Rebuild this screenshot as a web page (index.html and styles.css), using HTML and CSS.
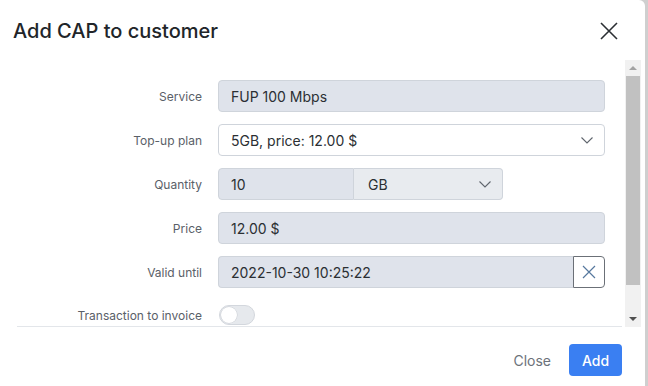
FILE: index.html
```html
<!DOCTYPE html>
<html>
<head>
<meta charset="utf-8">
<link rel="stylesheet" href="styles.css">
</head>
<body>
<div class="modal">
  <div class="modal-header">
    <h2 class="title">Add CAP to customer</h2>
    <button class="close-btn" aria-label="Close">
      <svg width="18" height="18" viewBox="0 0 18 18"><path d="M1 1 L17 17 M17 1 L1 17" stroke="#2b2f33" stroke-width="1.6" fill="none"/></svg>
    </button>
  </div>
  <div class="modal-body">
    <div class="scroll-content">
      <div class="form">
        <div class="row">
          <label class="label">Service</label>
          <div class="control"><div class="input disabled">FUP 100 Mbps</div></div>
        </div>
        <div class="row">
          <label class="label">Top-up plan</label>
          <div class="control">
            <div class="input select">5GB, price: 12.00 $
              <svg class="chev" width="12" height="7" viewBox="0 0 12 7"><path d="M0.5 0.5 L6 6 L11.5 0.5" stroke="#5f656d" stroke-width="1.1" fill="none"/></svg>
            </div>
          </div>
        </div>
        <div class="row">
          <label class="label">Quantity</label>
          <div class="control group qty">
            <div class="input disabled qty-input">10</div>
            <div class="input unit">GB
              <svg class="chev" width="12" height="7" viewBox="0 0 12 7"><path d="M0.5 0.5 L6 6 L11.5 0.5" stroke="#5f656d" stroke-width="1.1" fill="none"/></svg>
            </div>
          </div>
        </div>
        <div class="row">
          <label class="label">Price</label>
          <div class="control"><div class="input disabled">12.00 $</div></div>
        </div>
        <div class="row">
          <label class="label">Valid until</label>
          <div class="control group">
            <div class="input disabled date">2022-10-30 10:25:22</div>
            <button class="clear-btn" aria-label="Clear">
              <svg width="14" height="14" viewBox="0 0 14 14"><path d="M1 1 L13 13 M13 1 L1 13" stroke="#56789e" stroke-width="1.2" fill="none"/></svg>
            </button>
          </div>
        </div>
        <div class="row toggle-row">
          <label class="label">Transaction to invoice</label>
          <div class="control"><span class="toggle"><span class="knob"></span></span></div>
        </div>
      </div>
      <div class="divider"></div>
    </div>
    <div class="scrollbar">
      <div class="sb-btn"><span class="tri up"></span></div>
      <div class="sb-track"><div class="sb-thumb"></div></div>
      <div class="sb-btn"><span class="tri down"></span></div>
    </div>
  </div>
  <div class="modal-footer">
    <button class="btn btn-link">Close</button>
    <button class="btn btn-primary">Add</button>
  </div>
</div>
</body>
</html>
```
FILE: styles.css
```css
* { box-sizing: border-box; }
html, body { margin: 0; padding: 0; }
body {
  width: 648px;
  height: 386px;
  overflow: hidden;
  background: #cfcfcf;
  font-family: Inter, "Noto Sans", sans-serif;
  color: #2b2f33;
}
.modal {
  width: 645px;
  height: 390px;
  background: #fff;
  border-radius: 0 6px 0 0;
  display: flex;
  flex-direction: column;
}
.modal-header {
  height: 57px;
  display: flex;
  align-items: center;
  justify-content: space-between;
  padding: 4px 27px 0 13px;
}
.title {
  margin: 0;
  font-size: 20px;
  font-weight: 500;
  color: #212529;
}
.close-btn {
  border: 0;
  background: none;
  padding: 0;
  width: 18px;
  height: 18px;
  display: flex;
}
.modal-body {
  display: flex;
  height: 270px;
}
.scroll-content {
  flex: 1;
  overflow: hidden;
  padding: 0 0 0 17px;
  display: flex;
  flex-direction: column;
}
.form {
  flex: 1;
  overflow: hidden;
  padding-top: 23px;
  padding-right: 20px;
  display: flex;
  flex-direction: column;
  gap: 12px;
}
.row {
  display: flex;
  align-items: center;
  height: 32px;
  flex-shrink: 0;
}
.toggle-row { align-items: flex-start; }
.toggle-row .label { margin-top: 8px; }
.label {
  width: 185px;
  text-align: right;
  font-size: 12px;
  color: #5a6068;
  margin-right: 16px;
}
.control { flex: 1; display: flex; }
.input {
  height: 32px;
  flex: 1;
  border: 1px solid #cfd4db;
  border-radius: 4px;
  padding: 0 12px;
  display: flex;
  align-items: center;
  font-size: 14px;
  color: #2b2f33;
  background: #fff;
}
.input.disabled { background: #dfe3eb; }
.select { justify-content: space-between; padding-right: 11px; }
.qty { width: 285px; flex: none; }
.qty-input { flex: none; width: 136px; border-radius: 4px 0 0 4px; }
.unit {
  flex: none;
  width: 149px;
  background: #e8ebef;
  border-left: 0;
  border-radius: 0 4px 4px 0;
  justify-content: space-between;
  padding-left: 14px;
  padding-right: 11px;
}
.date { border-radius: 4px 0 0 4px; border-right: 0; }
.clear-btn {
  width: 32px;
  height: 32px;
  border: 1px solid #6b7077;
  border-radius: 0 4px 4px 0;
  background: #fff;
  padding: 0;
  display: flex;
  align-items: center;
  justify-content: center;
}
.toggle {
  margin-left: 1px;
  margin-top: 5px;
  width: 36px;
  height: 20px;
  border-radius: 10px;
  background: #e6e9ed;
  border: 1px solid #d3d7dd;
  display: flex;
  align-items: center;
  padding: 1px;
}
.knob {
  width: 16px;
  height: 16px;
  border-radius: 50%;
  background: #fff;
  box-shadow: 0 0 0 0.5px #c8ccd2;
}
.divider {
  height: 1px;
  background: #e3e6ea;
  margin-right: 3px;
  flex-shrink: 0;
}
.scrollbar {
  width: 16px;
  margin: 3px 4px 0 0;
  background: #f1f1f1;
  display: flex;
  flex-direction: column;
}
.sb-btn {
  height: 16px;
  display: flex;
  align-items: center;
  justify-content: center;
}
.sb-track { flex: 1; display: flex; flex-direction: column; }
.sb-thumb {
  height: 209px;
  margin: 0 1px;
  background: #c1c1c1;
}
.tri { width: 0; height: 0; border-left: 4px solid transparent; border-right: 4px solid transparent; }
.tri.up { border-bottom: 4px solid #a3a3a3; }
.tri.down { border-top: 4px solid #505050; }
.modal-footer {
  display: flex;
  justify-content: flex-end;
  align-items: center;
  gap: 6px;
  padding: 17px 23px 0 0;
}
.btn {
  font-family: Inter, "Noto Sans", sans-serif;
  font-size: 14px;
  height: 32px;
  border: 0;
  border-radius: 4px;
  padding: 0 12px;
}
.btn-link { background: none; color: #6c727a; }
.btn-primary { background: #3a7ff2; color: #fff; width: 53px; font-weight: 500; padding: 0; }
```
